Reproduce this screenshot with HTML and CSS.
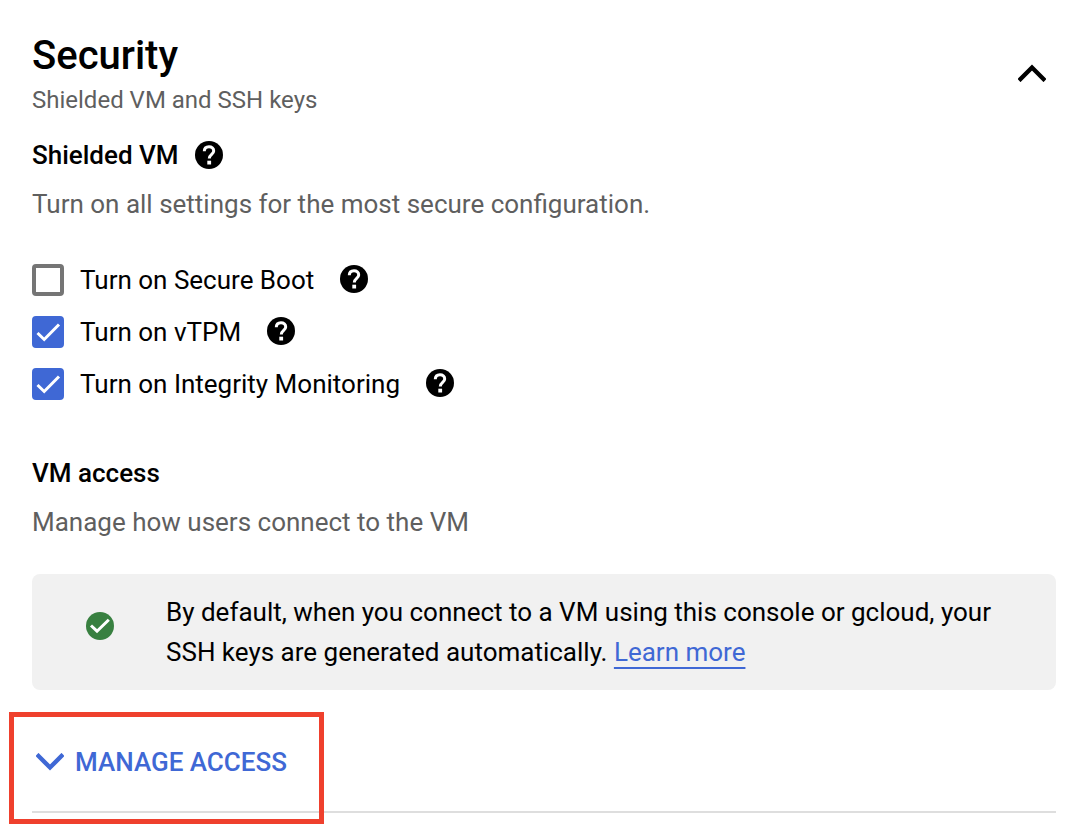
FILE: index.html
```html
<!DOCTYPE html>
<html lang="en">
<head>
<meta charset="utf-8">
<title>Security</title>
<meta name="viewport" content="width=device-width, initial-scale=1">
<link rel="stylesheet" href="styles.css">
</head>
<body>
<svg class="defs" aria-hidden="true">
  <symbol id="help" viewBox="0 0 28 28"><circle cx="14" cy="14" r="14" fill="currentColor"/><path d="M9.300 10.200C9.300 7.300 11.300 5.700 14 5.700s4.700 1.600 4.700 4.200c0 3.500-4.400 3.500-4.400 7.600" fill="none" stroke="#fff" stroke-width="3"/><path d="M12.300 19.700h3.800v3.800h-3.800z" fill="#fff"/></symbol>
</svg>
<main class="panel">
  <header class="panel-header">
    <div>
      <h1 class="title">Security</h1>
      <p class="subtitle">Shielded VM and SSH keys</p>
    </div>
    <button class="icon-button collapse" type="button" aria-label="Collapse section">
      <svg viewBox="0 0 28 18"><path d="M2.500 15L14 3.500 25.500 15" fill="none" stroke="currentColor" stroke-width="4.400" stroke-linecap="square"/></svg>
    </button>
  </header>
  <section>
    <div class="heading-row">
      <h2 class="heading">Shielded VM</h2>
      <button class="icon-button" type="button" aria-label="Help for Shielded VM"><svg class="help"><use href="#help"/></svg></button>
    </div>
    <p class="description">Turn on all settings for the most secure configuration.</p>
    <ul class="options">
      <li class="option">
        <input class="checkbox" type="checkbox" id="boot"><label for="boot">Turn on Secure Boot</label>
        <button class="icon-button" type="button" aria-label="Help for Secure Boot"><svg class="help"><use href="#help"/></svg></button>
      </li>
      <li class="option">
        <span class="checkbox-wrap"><input class="checkbox" type="checkbox" id="vtpm" checked><svg class="tick" viewBox="0 0 32 32"><path d="M5.500 17l6.700 6.500L27 8.500"/></svg></span><label for="vtpm">Turn on vTPM</label>
        <button class="icon-button" type="button" aria-label="Help for vTPM"><svg class="help"><use href="#help"/></svg></button>
      </li>
      <li class="option">
        <span class="checkbox-wrap"><input class="checkbox" type="checkbox" id="integrity" checked><svg class="tick" viewBox="0 0 32 32"><path d="M5.500 17l6.700 6.500L27 8.500"/></svg></span><label for="integrity">Turn on Integrity Monitoring</label>
        <button class="icon-button" type="button" aria-label="Help for Integrity Monitoring"><svg class="help"><use href="#help"/></svg></button>
      </li>
    </ul>
  </section>
  <section>
    <h2 class="heading">VM access</h2>
    <p class="description">Manage how users connect to the VM</p>
    <div class="notice">
      <svg class="success" viewBox="0 0 28 28"><circle cx="14" cy="14" r="14" fill="#388040"/><path d="M5 13.500l6 5.700L22.800 7.700" fill="none" stroke="#fff" stroke-width="3"/></svg>
      <p class="notice-text">By default, when you connect to a VM using this console or gcloud, your SSH keys are generated automatically. <a class="link" href="#learn">Learn more</a></p>
    </div>
  </section>
  <div class="actions">
    <button class="manage" type="button">
      <svg class="chevron" viewBox="0 0 28 18"><path d="M2.500 3L14 14.500 25.500 3" fill="none" stroke="currentColor" stroke-width="4.400" stroke-linecap="square"/></svg>MANAGE ACCESS
    </button>
  </div>
</main>
</body>
</html>
```
FILE: styles.css
```css
*, *::before { box-sizing: border-box; }
body { margin: 0; background: #fff; color: #000; font-family: Roboto, sans-serif; font-size: 26px; line-height: 32px; }
h1, h2, p, ul { margin: 0; padding: 0; }
button { font: inherit; color: inherit; border: 0; padding: 0; background: none; cursor: pointer; }
svg { display: block; flex: none; }
.defs { position: absolute; width: 0; height: 0; }
.panel { padding: 32px 32px 15px; }
.panel-header { display: flex; align-items: center; justify-content: space-between; padding-right: 10px; }
.title { font-size: 40px; line-height: 48px; font-weight: 500; }
.subtitle { font-size: 24px; line-height: 40px; color: #5f5f5f; }
.icon-button { display: flex; }
.collapse { margin-bottom: 7px; }
.collapse svg { width: 28px; height: 18px; }
.heading-row { display: flex; align-items: center; gap: 16px; margin-top: 19px; }
.heading { font-size: 26px; line-height: 32px; font-weight: 500; }
.help { width: 28px; height: 28px; }
.description { margin-top: 17px; color: #5f5f5f; }
.options { list-style: none; margin: 34px 0 47px; }
.option { display: flex; align-items: center; height: 52px; }
.option .icon-button { margin-bottom: 2px; }
.checkbox-wrap { position: relative; display: flex; }
.checkbox { appearance: none; width: 32px; height: 32px; margin: 0; border: 4px solid #757575; border-radius: 4px; background: #fff; }
.checkbox:checked { border-color: #3f68d5; background: #3f68d5; }
.tick { position: absolute; inset: 0; pointer-events: none; fill: none; stroke: #fff; stroke-width: 3; }
.option label { margin: 0 26px 0 16px; }
.notice { display: flex; align-items: flex-start; margin-top: 36px; padding: 18px 54px; gap: 52px; background: #f1f1f1; border-radius: 8px; }
.success { width: 28px; height: 28px; margin-top: 20px; }
.notice-text { line-height: 40px; }
.link { color: #3f68d5; text-decoration: underline; text-decoration-thickness: 2px; text-underline-offset: 6px; text-decoration-skip-ink: none; }
.actions { position: relative; margin-top: 22px; border-bottom: 2px solid #dedede; }
.actions::before { content: ""; position: absolute; left: -23px; top: 0; width: 315px; height: 112px; border: 5px solid #ef402d; pointer-events: none; }
.manage { display: flex; align-items: center; gap: 11px; height: 99px; padding-left: 4px; color: #3f68d5; font-weight: 500; }
.chevron { width: 28px; height: 18px; }
```
